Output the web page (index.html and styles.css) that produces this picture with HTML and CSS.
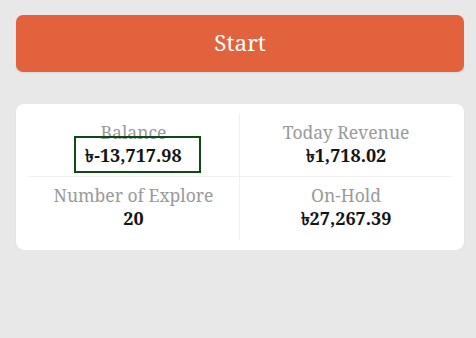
FILE: index.html
```html
<!DOCTYPE html>
<html>
<head>
	<meta http-equiv="Content-Type" content="text/html;charset=utf-8"/>
	<title>Dashboard</title>
	<link rel="stylesheet" href="styles.css">
</head>
<body>
	<div class="page">
		<a href="javascript:;" class="start">Start</a>
		<div class="card">
			<div class="stats">
				<div class="cell">
					<p class="label">Balance</p>
					<p class="value"><span class="marked">৳-13,717.98</span></p>
				</div>
				<div class="cell">
					<p class="label">Today Revenue</p>
					<p class="value">৳1,718.02</p>
				</div>
				<div class="cell">
					<p class="label">Number of Explore</p>
					<p class="value">20</p>
				</div>
				<div class="cell">
					<p class="label">On-Hold</p>
					<p class="value">৳27,267.39</p>
				</div>
			</div>
		</div>
	</div>
</body>
</html>
```
FILE: styles.css
```css
*{
	margin: 0;
	padding: 0;
	text-decoration: none;
	box-sizing: border-box;
}
body{
	background: #e8e8e8;
	font-family: "Noto Serif", "DejaVu Serif", "Liberation Serif", serif;
}
.page{
	padding: 15px 12px 0 16px;
	display: flex;
	flex-direction: column;
	gap: 32px;
}
.start{
	display: block;
	height: 57px;
	line-height: 56px;
	text-align: center;
	color: #fff;
	font-size: 22.5px;
	background: #e2623e;
	border-radius: 7px;
	box-shadow: 0 1px 2px rgba(0,0,0,.08);
}
.card{
	background: #fff;
	border-radius: 8px;
	padding: 10px 12px 10px 12px;
	box-shadow: 0 1px 2px rgba(0,0,0,.06);
}
.stats{
	display: grid;
	grid-template-columns: 1fr 1fr;
}
.cell{
	height: 63px;
	padding-top: 7px;
	text-align: center;
}
.cell:nth-child(odd){
	border-right: 1px solid #f0f0f0;
}
.cell:nth-child(-n+2){
	border-bottom: 1px solid #f0f0f0;
}
.label{
	font-size: 17.5px;
	line-height: 23px;
	color: #9a9a9a;
}
.value{
	font-size: 18px;
	font-weight: bold;
	line-height: 23px;
	color: #141414;
}
.marked{
	display: inline-block;
	padding: 6px 17px 4px 9px;
	margin: -6px -17px -4px -9px;
	outline: 2px solid #0d4a14;
}
```
